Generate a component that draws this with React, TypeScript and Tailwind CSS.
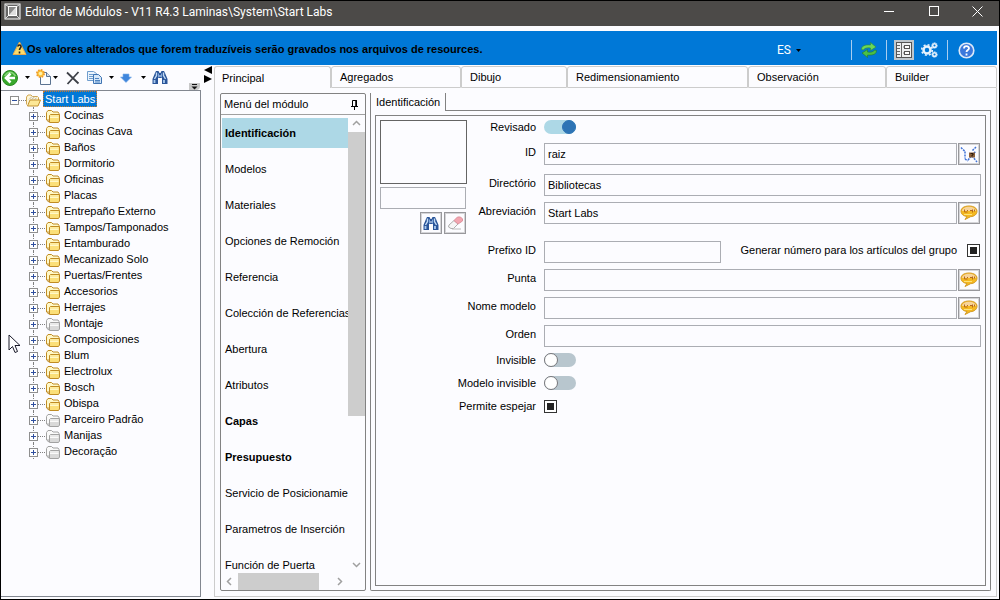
import { useState } from 'react';

const folders = [
  { name: 'Cocinas' },
  { name: 'Cocinas Cava' },
  { name: 'Baños' },
  { name: 'Dormitorio' },
  { name: 'Oficinas' },
  { name: 'Placas' },
  { name: 'Entrepaño Externo' },
  { name: 'Tampos/Tamponados' },
  { name: 'Entamburado' },
  { name: 'Mecanizado Solo' },
  { name: 'Puertas/Frentes' },
  { name: 'Accesorios' },
  { name: 'Herrajes' },
  { name: 'Montaje', gray: true },
  { name: 'Composiciones' },
  { name: 'Blum' },
  { name: 'Electrolux' },
  { name: 'Bosch' },
  { name: 'Obispa' },
  { name: 'Parceiro Padrão', gray: true },
  { name: 'Manijas', gray: true },
  { name: 'Decoração', gray: true },
];

const menu = [
  { name: 'Identificación', bold: true },
  { name: 'Modelos' },
  { name: 'Materiales' },
  { name: 'Opciones de Remoción' },
  { name: 'Referencia' },
  { name: 'Colección de Referencias' },
  { name: 'Abertura' },
  { name: 'Atributos' },
  { name: 'Capas', bold: true },
  { name: 'Presupuesto', bold: true },
  { name: 'Servicio de Posicionamie' },
  { name: 'Parametros de Inserción' },
  { name: 'Función de Puerta' },
];

const tabs = [
  { name: 'Principal', width: 'w-[117px]' },
  { name: 'Agregados', width: 'w-[130px]' },
  { name: 'Dibujo', width: 'w-[106px]' },
  { name: 'Redimensionamiento', width: 'w-[181px]' },
  { name: 'Observación', width: 'w-[138px]' },
  { name: 'Builder', width: 'flex-1' },
];

function Caret({ className = '' }) {
  return (
    <svg className={className} width="5" height="3" viewBox="0 0 5 3">
      <path d="M0 0h5L2.5 3z" fill="#000" />
    </svg>
  );
}

function FolderIcon({ gray = false }) {
  const edge = gray ? '#a2a2a2' : '#c08c24';
  const fill = gray ? '#d9d9d9' : '#fbdf78';
  const light = gray ? '#fafafa' : '#fff8c8';
  return (
    <svg width="15" height="13" viewBox="0 0 15 13" className="shrink-0">
      <path d="M.5 10V2.500L2 .5h3.500L7 2h5l1 1.500v7z" fill={light} stroke={edge} />
      <path d="M3.500 5.500l1-1h9V11l-1 1.500h-9z" fill={fill} stroke={edge} />
      <path d="M4 6h8.500M4 7.500h8.500" stroke={light} />
      <path d="M1 10.500l2 1.500" stroke={edge} />
    </svg>
  );
}

function OpenFolderIcon() {
  return (
    <svg width="15" height="13" viewBox="0 0 15 13" className="shrink-0">
      <path d="M.5 10.500V3L2 1h3l1.500 1.500h5l1 1v3" fill="#fff6d4" stroke="#cfa653" />
      <path d="M3 5.500l3-3M5.500 5.500l3-2.500M8.500 5.500l2-1.500" stroke="#b4b4b4" />
      <path d="M1.500 12L4 6h10.500l-2.500 6z" fill="#fce796" stroke="#c2902e" />
    </svg>
  );
}

function Expander({ open = false }) {
  return (
    <svg width="9" height="9" viewBox="0 0 9 9" className="relative shrink-0">
      <rect x=".5" y=".5" width="8" height="8" fill="#fff" stroke="#8f8f8f" />
      <path d={open ? 'M2 4.500h5' : 'M2 4.500h5M4.500 2v5'} stroke="#2f4f9f" />
    </svg>
  );
}

function Binoculars() {
  return (
    <svg width="16" height="15" viewBox="0 0 16 15">
      <path d="M4 1h2.500l1 2h1l1-2H12l1 2 2.500 6v5H10V8H6v6H.5V9L3 3z" fill="#2a5599" />
      <path d="M4.500 2.500v3L2.500 9M11.500 2.500v3L13.500 9" stroke="#c4dbf5" strokeWidth="1.400" fill="none" />
      <path d="M2.500 10v3M12 10v3" stroke="#a9c9ee" strokeWidth="1.800" />
      <path d="M6.500 3.500v4M9.500 3.500v4" stroke="#82a8da" />
      <path d="M7 6h2" stroke="#e8f1fb" />
    </svg>
  );
}

function Eraser() {
  return (
    <svg width="17" height="16" viewBox="0 0 17 16">
      <path d="M5 14h9" stroke="#d0d0d0" strokeWidth="1.500" />
      <path d="M2 10l5-4.500 4 3.500-4.500 4.500H4L1.500 12z" fill="#f6f6f6" stroke="#aeaeae" />
      <path d="M7 5.500l3.500-3.500h3l2 2v2L11 9z" fill="#f3a5b0" stroke="#dd929d" />
    </svg>
  );
}

function Bubble() {
  return (
    <svg width="18" height="16" viewBox="0 0 18 16">
      <path d="M9 1C4 1 1 3.200 1 6.200S3.500 11 7 11.500L5 14.500l5.500-2.800c4-.3 6.500-2.500 6.500-5.500S14 1 9 1z" fill="#f5b921" stroke="#d39a25" />
      <path d="M9 1.800C5 1.800 2.200 3.500 2 6h14C15.800 3.500 13 1.800 9 1.800z" fill="#f7d49a" />
      <path d="M4.500 4.500v2.500h3M7.500 5v1M10 5.500h2M12.500 4.500v3M14.500 4.500v2" stroke="#b5691f" fill="none" />
      <path d="M4 9.500h8" stroke="#fde37c" />
    </svg>
  );
}

function AxisIcon() {
  return (
    <svg width="18" height="17" viewBox="0 0 18 17">
      <path d="M1 1.500l4 4M5 5.500v7M5 13l3 2M16 1l-4 4M8 14l8-9M12 10l5 6" stroke="#3f72d6" strokeWidth="1.500" strokeDasharray="2 1" fill="none" />
      <path d="M9 6.500h6v5H9z" fill="#8a5f3a" />
      <path d="M10.500 7.500h2.500v1.500h-1v1.500" stroke="#2a1a0c" fill="none" />
    </svg>
  );
}

function TextField({ id, value = '', className = 'flex-1' }) {
  return (
    <input
      id={id}
      type="text"
      defaultValue={value}
      className={`h-[22px] min-w-0 border border-[#abadb3] bg-[#fcfcff] px-[3px] outline-none ${className}`}
    />
  );
}

function Row({ id, label, gap, children }) {
  return (
    <div className={`flex ${gap}`}>
      <label htmlFor={id} className="w-[156px] shrink-0 pr-2 text-right leading-[18px]">
        {label}
      </label>
      <div className="flex min-w-0 flex-1 items-center gap-px">{children}</div>
    </div>
  );
}

function SideButton({ label, className = '', children }) {
  return (
    <button
      aria-label={label}
      className={`flex size-[22px] shrink-0 items-center justify-center border border-[#98989c] bg-[#fcfcff] ring-1 ring-inset ring-[#d5d5d8] ${className}`}
    >
      {children}
    </button>
  );
}

function Toggle({ id, on = false }) {
  return (
    <input
      id={id}
      type="checkbox"
      role="switch"
      defaultChecked={on}
      className="h-[14px] w-8 appearance-none rounded-full bg-[#b8c6ce] before:block before:size-[14px] before:rounded-full before:border before:border-[#77777b] before:bg-white checked:bg-[#add8e6] checked:before:translate-x-[18px] checked:before:border-[#2e74b5] checked:before:bg-[#2e74b5]"
    />
  );
}

function Check({ id }) {
  return (
    <input
      id={id}
      type="checkbox"
      defaultChecked
      className="flex size-[13px] shrink-0 appearance-none items-center justify-center border border-[#333] bg-white checked:before:size-[7px] checked:before:bg-[#222]"
    />
  );
}

function Chevron({ d }) {
  return (
    <svg width="9" height="9" viewBox="0 0 9 9">
      <path d={d} stroke="#a0a0a0" strokeWidth="1.500" fill="none" />
    </svg>
  );
}

function TitleBar() {
  return (
    <header className="flex h-[25px] items-center bg-[#4c4a48] pl-[3px] text-white">
      <svg width="17" height="17" viewBox="0 0 17 17" className="-mt-1">
        <rect x="1" y="1" width="15" height="15" fill="#666" stroke="#fff" />
        <path d="M2 2l3 2M15 2l-3 2M2 15l3-3M15 15l-3-3" stroke="#ddd" />
        <rect x="4.500" y="3.500" width="8" height="9" fill="#8a8a8a" stroke="#fff" />
        <path d="M5 12l7-8v8z" fill="#dedede" />
      </svg>
      <h1 className="-mt-1 min-w-0 flex-1 truncate pl-1 font-[Roboto,sans-serif] text-xs">
        Editor de Módulos - V11 R4.3 Laminas\System\Start Labs
      </h1>
      <div className="-mt-1 flex pl-1">
        <button aria-label="Minimizar" className="flex w-[45px] justify-center">
          <svg width="11" height="11" viewBox="0 0 11 11">
            <path d="M1 5.500h10" stroke="#fff" />
          </svg>
        </button>
        <button aria-label="Maximizar" className="flex w-[45px] justify-center">
          <svg width="11" height="11" viewBox="0 0 11 11">
            <rect x="1.500" y=".5" width="9" height="9" stroke="#fff" fill="none" />
          </svg>
        </button>
        <button aria-label="Cerrar" className="flex w-[43px] justify-center">
          <svg width="11" height="11" viewBox="0 0 11 11">
            <path d="M.5.5l10 10M10.500.5l-10 10" stroke="#fff" />
          </svg>
        </button>
      </div>
    </header>
  );
}

function Banner() {
  return (
    <div className="mt-[5px] mr-[2px] flex h-[34px] items-center bg-[#0078d7] pr-[22px] pl-[11px]">
      <svg width="15" height="15" viewBox="0 0 15 15" className="shrink-0">
        <path d="M7.500 1L14 13.500H1z" fill="#fcdc6a" stroke="#eda94a" strokeLinejoin="round" />
        <path d="M6 5.500c0-2 3-2 3 0 0 1.500-1.500 1.500-1.500 3.500M7.500 10.500v2" stroke="#222" strokeWidth="1.600" fill="none" />
      </svg>
      <p className="flex-1 truncate pt-px font-bold">
        Os valores alterados que forem traduzíveis serão gravados nos arquivos de resources.
      </p>
      <div className="mt-1 flex items-center">
        <button className="mr-[50px] flex items-center gap-[5px] font-[Roboto,sans-serif] text-xs text-white">
          ES <Caret />
        </button>
        <span className="h-5 w-px bg-[#a9cdf0]" />
        <button aria-label="Actualizar" className="mx-[9px]">
          <svg width="16" height="16" viewBox="0 0 16 16">
            <path d="M.5 7.500C.5 4 3.500 2.500 9.500 3V.5L15 5l-5.500 3.500V6C6 5.500 3.500 6 2.500 8z" fill="#6bd858" stroke="#2f8f32" strokeWidth=".6" />
            <path d="M15.500 8.500c0 3.500-3 5-9 4.500v2.500L1 11l5.500-3.500V10c3.500.5 6 0 7-2z" fill="#4cc045" stroke="#227a2a" strokeWidth=".6" />
          </svg>
        </button>
        <span className="h-5 w-px bg-[#a9cdf0]" />
        <button aria-label="Propiedades" className="ml-[7px] flex size-5 items-center justify-center bg-[#bfc7cd]">
          <svg width="16" height="16" viewBox="0 0 16 16">
            <rect x=".5" y=".5" width="15" height="15" fill="#eef0f1" stroke="#555" />
            <path d="M5.500 1v14M1 3.500h3M1 6.500h3M1 9.500h3M1 12.500h3" stroke="#666" />
            <rect x="8.500" y="3.500" width="5" height="3" fill="#fff" stroke="#555" />
            <rect x="8.500" y="9.500" width="5" height="3" fill="#fff" stroke="#555" />
            <path d="M7 5h1M7 11h1" stroke="#777" />
          </svg>
        </button>
        <button aria-label="Configuración" className="mx-[7px]">
          <svg width="17" height="16" viewBox="0 0 17 16" fill="none" stroke="#e8f3fd">
            <circle cx="6" cy="8" r="3.500" strokeWidth="2.500" />
            <circle cx="6" cy="8" r="5.300" strokeWidth="1.600" strokeDasharray="2 2.160" />
            <circle cx="13.500" cy="3.500" r="1.800" strokeWidth="1.500" />
            <circle cx="13.500" cy="12.500" r="1.800" strokeWidth="1.500" />
            <circle cx="13.500" cy="3.500" r="2.900" strokeDasharray="1 1.200" />
            <circle cx="13.500" cy="12.500" r="2.900" strokeDasharray="1 1.200" />
          </svg>
        </button>
        <span className="ml-[2px] h-5 w-px bg-[#a9cdf0]" />
        <button aria-label="Ayuda" className="ml-[10px] pt-px">
          <svg width="17" height="17" viewBox="0 0 17 17">
            <circle cx="8.500" cy="8.500" r="7.300" fill="#3b78dc" stroke="#dce8f8" strokeWidth="1.600" />
            <path d="M6 6.500C6 3.500 11 3.500 11 6.300c0 1.700-2.500 1.700-2.500 3.700M8.500 11.500v2" fill="none" stroke="#fff" strokeWidth="1.800" />
          </svg>
        </button>
      </div>
    </div>
  );
}

function Toolbar() {
  return (
    <div className="flex h-[25px] items-center pl-px">
      <button aria-label="Volver">
        <svg width="16" height="16" viewBox="0 0 16 16">
          <circle cx="8" cy="8" r="7.500" fill="#38a82c" stroke="#2a8a22" />
          <path d="M2.500 6Q8-1.500 13.500 6" stroke="#86d278" strokeWidth="1.500" fill="none" />
          <path d="M13 8H5M8.500 3.500L4 8l4.500 4.500" stroke="#fff" strokeWidth="2.600" fill="none" />
        </svg>
      </button>
      <Caret className="ml-[7px]" />
      <button aria-label="Nuevo" className="ml-[6px]">
        <svg width="16" height="17" viewBox="0 0 16 17">
          <path d="M4.500 3.500h6l4 4v8h-10z" fill="#fbfdff" stroke="#5b7391" />
          <path d="M10.500 3.500v4h4" fill="#d3e0ee" stroke="#5b7391" />
          <circle cx="4.500" cy="4.500" r="3.600" fill="#fbc23a" stroke="#ee9a2c" strokeDasharray="1.600 1.200" strokeWidth="1.800" />
          <circle cx="4.500" cy="4.500" r="1.800" fill="#fff0a8" />
        </svg>
      </button>
      <Caret className="ml-px" />
      <button aria-label="Eliminar" className="ml-[8px]">
        <svg width="14" height="14" viewBox="0 0 14 14">
          <path d="M1 1.500l11.500 11M12.500 1L1.500 13" stroke="#3d4048" strokeWidth="1.800" />
        </svg>
      </button>
      <button aria-label="Copiar" className="ml-[7px]">
        <svg width="16" height="15" viewBox="0 0 16 15">
          <path d="M.5 1.500h6l3 2v7h-9z" fill="#eaf3fc" stroke="#6f9dce" />
          <path d="M2 4.500h5M2 6.500h4M2 8.500h4" stroke="#6f9dce" />
          <path d="M6.500 4.500h5l3 3v6h-8z" fill="#d6e7f8" stroke="#3f74b3" />
          <path d="M8 8.500h4M8 10.500h5M8 12h5" stroke="#4d83c1" />
        </svg>
      </button>
      <Caret className="ml-[6px]" />
      <button aria-label="Bajar" className="ml-[6px]">
        <svg width="12" height="10" viewBox="0 0 12 10">
          <path d="M3 1h6v3h2.500L6 9.500.5 4H3z" fill="#3f86dc" stroke="#7db0ea" strokeWidth=".6" />
        </svg>
      </button>
      <Caret className="ml-[9px]" />
      <button aria-label="Buscar" className="ml-[6px]">
        <Binoculars />
      </button>
      <button aria-label="Más opciones" className="mr-px ml-auto self-end rounded-br bg-[#c8c8c8] px-[2px] pt-px">
        <svg width="7" height="6" viewBox="0 0 7 6">
          <path d="M1 .5h5" stroke="#111" />
          <path d="M.5 2.500h6l-3 3z" fill="#111" />
        </svg>
      </button>
    </div>
  );
}

function Tree() {
  return (
    <div className="min-h-0 flex-1 overflow-hidden border border-l-0 border-[#828790]">
      <ul>
        <li>
          <div className="flex pl-[9px]">
            <span className="flex h-4 items-center pt-[3px]">
              <Expander open />
              <span className="w-[7px] border-t border-dotted border-[#808080]" />
              <OpenFolderIcon />
            </span>
            <button className="ml-[2px] border border-dotted border-[#c77a2e] bg-[#0078d7] px-px leading-[14px] text-white">
              Start Labs
            </button>
          </div>
          <ul className="ml-[28px]">
            {folders.map((folder, i) => (
              <li key={i} className="relative flex h-4">
                <span className="absolute inset-y-0 left-1 border-l border-dotted border-[#808080]" />
                <span className="flex h-4 items-center pt-[3px]">
                  <Expander />
                  <span className="mr-px w-[7px] border-t border-dotted border-[#808080]" />
                  <FolderIcon gray={folder.gray} />
                </span>
                <button className="ml-[3px] leading-[14px]">{folder.name}</button>
              </li>
            ))}
          </ul>
        </li>
      </ul>
    </div>
  );
}

function ModuleMenu() {
  const [selected, setSelected] = useState('Identificación');
  return (
    <section className="flex w-[146px] shrink-0 flex-col rounded-[2px] border border-[#828282]">
      <div className="flex h-[21px] shrink-0 items-center justify-between border-b border-[#a0a0a0] pr-[6px] pl-[3px]">
        <h2>Menú del módulo</h2>
        <button aria-label="Fijar">
          <svg width="9" height="11" viewBox="0 0 9 11">
            <path d="M2.500 7V1.500h4V7M1 7.500h7M4.500 8v3" stroke="#000" fill="none" />
            <path d="M6 1v6" stroke="#000" strokeWidth="1.500" />
          </svg>
        </button>
      </div>
      <div className="flex min-h-0 flex-1">
        <ul className="flex min-w-0 flex-1 flex-col gap-[6px] overflow-hidden pt-[3px] pl-px">
          {menu.map((item) => (
            <li key={item.name} className="shrink-0">
              <button
                onClick={() => setSelected(item.name)}
                className={`block h-[30px] w-full overflow-hidden pl-[3px] text-left whitespace-nowrap ${
                  item.bold ? 'font-bold' : ''
                } ${selected === item.name ? 'bg-[#add8e6]' : ''}`}
              >
                {item.name}
              </button>
            </li>
          ))}
        </ul>
        <div className="flex w-[17px] shrink-0 flex-col items-center justify-between py-[4px]">
          <Chevron d="M1 6l3.500-3.500L8 6" />
          <div className="mt-[4px] mb-auto h-[63%] w-full bg-[#cdcdcd]" />
          <Chevron d="M1 3l3.500 3.500L8 3" />
        </div>
      </div>
      <div className="mr-[17px] flex h-[17px] shrink-0 items-center px-[4px]">
        <Chevron d="M6 1L2.500 4.500 6 8" />
        <div className="mr-auto ml-[4px] h-full w-[81px] bg-[#cdcdcd]" />
        <Chevron d="M3 1l3.500 3.500L3 8" />
      </div>
    </section>
  );
}

function IdentificationForm() {
  return (
    <form className="flex min-h-0 flex-1 items-start border border-[#828282] p-1" onSubmit={(e) => e.preventDefault()}>
      <div className="-mr-[79px] w-[87px] shrink-0">
        <div className="h-16 border border-[#646464]" />
        <input aria-label="Imagen" className="mt-[3px] block h-[22px] w-[86px] border border-[#abadb3] bg-[#fcfcff] px-[3px]" />
        <div className="mt-[3px] mr-px flex justify-end gap-[2px]">
          <SideButton label="Buscar imagen">
            <Binoculars />
          </SideButton>
          <SideButton label="Borrar imagen">
            <Eraser />
          </SideButton>
        </div>
      </div>
      <div className="min-w-0 flex-1">
        <Row id="revisado" label="Revisado" gap="-mt-[2px] h-[18px]">
          <Toggle id="revisado" on />
        </Row>
        <Row id="raiz" label="ID" gap="mt-[7px]">
          <TextField id="raiz" value="raiz" />
          <SideButton label="Generar ID" className="mr-px">
            <AxisIcon />
          </SideButton>
        </Row>
        <Row id="directorio" label="Directório" gap="mt-[9px]">
          <TextField id="directorio" value="Bibliotecas" />
        </Row>
        <Row id="abreviacion" label="Abreviación" gap="mt-[6px]">
          <TextField id="abreviacion" value="Start Labs" />
          <SideButton label="Traducir abreviación" className="mr-px">
            <Bubble />
          </SideButton>
        </Row>
        <Row id="prefijo" label="Prefixo ID" gap="mt-[17px]">
          <TextField id="prefijo" className="w-[177px]" />
          <span className="mr-px ml-auto flex items-center gap-[10px] self-start leading-[18px]">
            <label htmlFor="generar" className="whitespace-nowrap">
              Generar número para los artículos del grupo
            </label>
            <Check id="generar" />
          </span>
        </Row>
        <Row id="punta" label="Punta" gap="mt-[6px]">
          <TextField id="punta" />
          <SideButton label="Traducir punta" className="mr-px">
            <Bubble />
          </SideButton>
        </Row>
        <Row id="modelo" label="Nome modelo" gap="mt-[6px]">
          <TextField id="modelo" />
          <SideButton label="Traducir nombre" className="mr-px">
            <Bubble />
          </SideButton>
        </Row>
        <Row id="orden" label="Orden" gap="mt-[6px]">
          <TextField id="orden" />
        </Row>
        <Row id="invisible" label="Invisible" gap="mt-1">
          <Toggle id="invisible" />
        </Row>
        <Row id="modelo-invisible" label="Modelo invisible" gap="mt-[5px]">
          <Toggle id="modelo-invisible" />
        </Row>
        <Row id="espejar" label="Permite espejar" gap="mt-[5px]">
          <Check id="espejar" />
        </Row>
      </div>
    </form>
  );
}

export default function App() {
  const [tab, setTab] = useState('Principal');
  return (
    <div className="relative flex h-screen min-w-0 flex-col overflow-hidden border border-black bg-[#fcfcff] font-['Liberation_Sans',Arial,sans-serif] text-[11px] leading-[14px] text-black">
      <TitleBar />
      <Banner />
      <main className="flex min-h-0 flex-1 pr-[2px] pb-[2px]">
        <aside className="flex w-[200px] shrink-0 flex-col">
          <Toolbar />
          <Tree />
        </aside>
        <div className="flex w-[13px] shrink-0 flex-col items-center pt-px">
          <svg width="8" height="17" viewBox="0 0 8 17">
            <path d="M8 0v8L0 4zM0 9v8l8-4z" fill="#000" />
          </svg>
        </div>
        <div className="flex min-w-0 flex-1 flex-col pt-px">
          <div role="tablist" className="flex h-[22px] shrink-0">
            {tabs.map((t) => (
              <button
                key={t.name}
                role="tab"
                aria-selected={tab === t.name}
                onClick={() => setTab(t.name)}
                className={`rounded-t-[3px] border-x border-t border-[#ccc] text-left ${t.width} ${
                  tab === t.name ? 'pl-[7px]' : 'border-b pl-2'
                }`}
              >
                {t.name}
              </button>
            ))}
          </div>
          <div className="flex min-h-0 flex-1 gap-1 border border-t-0 border-[#ccc] px-[5px] pt-[5px] pb-[5px]">
            <ModuleMenu />
            <section className="flex min-w-0 flex-1 flex-col">
              <div className="flex h-[18px] shrink-0">
                <h2 className="w-[76px] shrink-0 border-r border-l border-[#828282] pl-[5px] leading-[18px]">
                  Identificación
                </h2>
                <div className="flex-1 border-b border-[#828282]" />
              </div>
              <div className="flex min-h-0 flex-1 rounded-b-[2px] border border-t-0 border-[#828282] p-1">
                <IdentificationForm />
              </div>
            </section>
          </div>
        </div>
      </main>
      {/* mouse pointer */}
      <svg className="pointer-events-none absolute top-[333px] left-[7px]" width="13" height="20" viewBox="0 0 13 20">
        <path d="M1 1v15l3.500-3.500L7 18.500l2.500-1L7 11.500h5z" fill="#fff" stroke="#1a1a2a" />
      </svg>
    </div>
  );
}
